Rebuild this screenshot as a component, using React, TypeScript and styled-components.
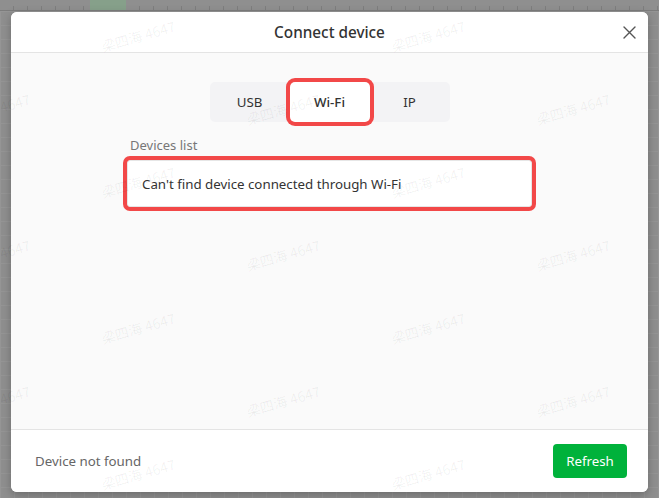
import { useState } from "react";
import styled, { createGlobalStyle } from "styled-components";

const GlobalStyle = createGlobalStyle`
  html, body {
    margin: 0;
    padding: 0;
    height: 100%;
  }
  body {
    font-family: "Noto Sans", "Noto Sans CJK SC", sans-serif;
    overflow: hidden;
  }
`;

const tabs = ["USB", "Wi-Fi", "IP"];

const marks: { x: number; y: number }[] = [];
for (let row = 0; row < 7; row++) {
  const offset = row % 2 === 0 ? 100 : -45;
  for (let col = 0; col < 3; col++) {
    const x = offset + col * 290;
    if (x < 600) marks.push({ x, y: 26 + row * 73 });
  }
}

export default function App() {
  const [active, setActive] = useState("Wi-Fi");

  return (
    <>
      <GlobalStyle />
      <Backdrop>
        <Ruler>
          <RulerMark />
        </Ruler>
        <Grid />
      </Backdrop>
      <Overlay>
        <Modal>
          <Header>
            <Title>Connect device</Title>
            <CloseButton aria-label="close">
              <svg width="13" height="13" viewBox="0 0 13 13">
                <path
                  d="M1 1 L12 12 M12 1 L1 12"
                  stroke="#555"
                  strokeWidth="1.4"
                  strokeLinecap="round"
                />
              </svg>
            </CloseButton>
          </Header>
          <Body>
            <TabsRow>
              <Tabs>
                {tabs.map((tab) => (
                  <Tab
                    key={tab}
                    $active={tab === active}
                    onClick={() => setActive(tab)}
                  >
                    {tab}
                  </Tab>
                ))}
              </Tabs>
            </TabsRow>
            <Label>Devices list</Label>
            <ListBox>
              <EmptyText>Can't find device connected through {active}</EmptyText>
            </ListBox>
          </Body>
          <Footer>
            <Status>Device not found</Status>
            <RefreshButton>Refresh</RefreshButton>
          </Footer>
        </Modal>
      </Overlay>
      <Watermarks>
        {marks.map((m, i) => (
          <Mark key={i} style={{ left: m.x, top: m.y }}>
            梁四海 4647
          </Mark>
        ))}
      </Watermarks>
    </>
  );
}

const Backdrop = styled.div`
  position: fixed;
  inset: 0;
  background: #8f8f8f;
  display: flex;
  flex-direction: column;
`;

const Ruler = styled.div`
  height: 10px;
  border-bottom: 1px solid #7c7c7c;
  background: repeating-linear-gradient(
    to right,
    transparent 0 13px,
    #7e7e7e 13px 14px
  );
  background-size: 14px 4px;
  background-repeat: repeat-x;
  background-position: 0 6px;
  position: relative;
`;

const RulerMark = styled.div`
  position: absolute;
  left: 90px;
  top: 0;
  width: 36px;
  height: 10px;
  background: #86a08a;
`;

const Grid = styled.div`
  flex: 1;
  background-image: linear-gradient(#999 1px, transparent 1px),
    linear-gradient(to right, #999 1px, transparent 1px);
  background-size: 14px 14px;
  opacity: 0.6;
`;

const Overlay = styled.div`
  position: fixed;
  inset: 0;
  padding: 12px 11px 0 11px;
  display: flex;
  align-items: flex-start;
  justify-content: flex-start;
`;

const Modal = styled.div`
  width: 637px;
  height: 480px;
  background: #fafafa;
  border-radius: 6px;
  box-shadow: 0 3px 10px rgba(0, 0, 0, 0.25);
  display: flex;
  flex-direction: column;
  overflow: hidden;
`;

const Header = styled.div`
  height: 40px;
  flex-shrink: 0;
  background: #fff;
  border-bottom: 1px solid #e4e4e4;
  display: flex;
  align-items: center;
  justify-content: center;
  position: relative;
`;

const Title = styled.div`
  font-size: 15.3px;
  color: #333;
  font-weight: 500;
`;

const CloseButton = styled.button`
  position: absolute;
  right: 12px;
  top: 14px;
  width: 13px;
  height: 13px;
  padding: 0;
  border: none;
  background: transparent;
  display: flex;
  cursor: pointer;
`;

const Body = styled.div`
  flex: 1;
  display: flex;
  flex-direction: column;
  padding: 29px 112px 0 112px;
`;

const TabsRow = styled.div`
  display: flex;
  justify-content: center;
`;

const Tabs = styled.div`
  display: flex;
  width: 240px;
  background: #f3f3f5;
  border-radius: 5px;
  height: 40px;
  align-items: stretch;
`;

const Tab = styled.div<{ $active: boolean }>`
  flex: 1;
  display: flex;
  align-items: center;
  justify-content: center;
  font-size: 13.3px;
  color: #333;
  border-radius: 5px;
  cursor: pointer;
  background: ${(p) => (p.$active ? "#fff" : "transparent")};
  font-weight: ${(p) => (p.$active ? 500 : 400)};
  box-shadow: ${(p) => (p.$active ? "0 0 0 4px #f24848" : "none")};
`;

const Label = styled.div`
  margin: 14px 0 0 7px;
  font-size: 13px;
  color: #777;
  line-height: 18px;
`;

const ListBox = styled.div`
  margin: 6px 4px 0 4px;
  height: 47px;
  box-sizing: border-box;
  background: #fff;
  border: 1px solid #e6e6e6;
  border-radius: 3px;
  box-shadow: 0 0 0 4px #f24848;
  display: flex;
  align-items: center;
  padding-left: 14px;
`;

const EmptyText = styled.div`
  font-size: 13.3px;
  color: #333;
`;

const Footer = styled.div`
  height: 62px;
  flex-shrink: 0;
  background: #fff;
  border-top: 1px solid #e4e4e4;
  display: flex;
  align-items: center;
  justify-content: space-between;
  padding: 0 21px 0 24px;
`;

const Status = styled.div`
  font-size: 13.3px;
  color: #666;
`;

const RefreshButton = styled.button`
  width: 74px;
  height: 34px;
  border: none;
  border-radius: 4px;
  background: #00b23b;
  color: #fff;
  font-family: inherit;
  font-size: 13.3px;
  cursor: pointer;
`;

const Watermarks = styled.div`
  position: fixed;
  inset: 0;
  pointer-events: none;
  overflow: hidden;
`;

const Mark = styled.div`
  position: absolute;
  font-size: 14px;
  color: rgba(0, 0, 0, 0.06);
  transform: rotate(-16deg);
  white-space: nowrap;
  font-family: "Noto Sans CJK SC", sans-serif;
`;
